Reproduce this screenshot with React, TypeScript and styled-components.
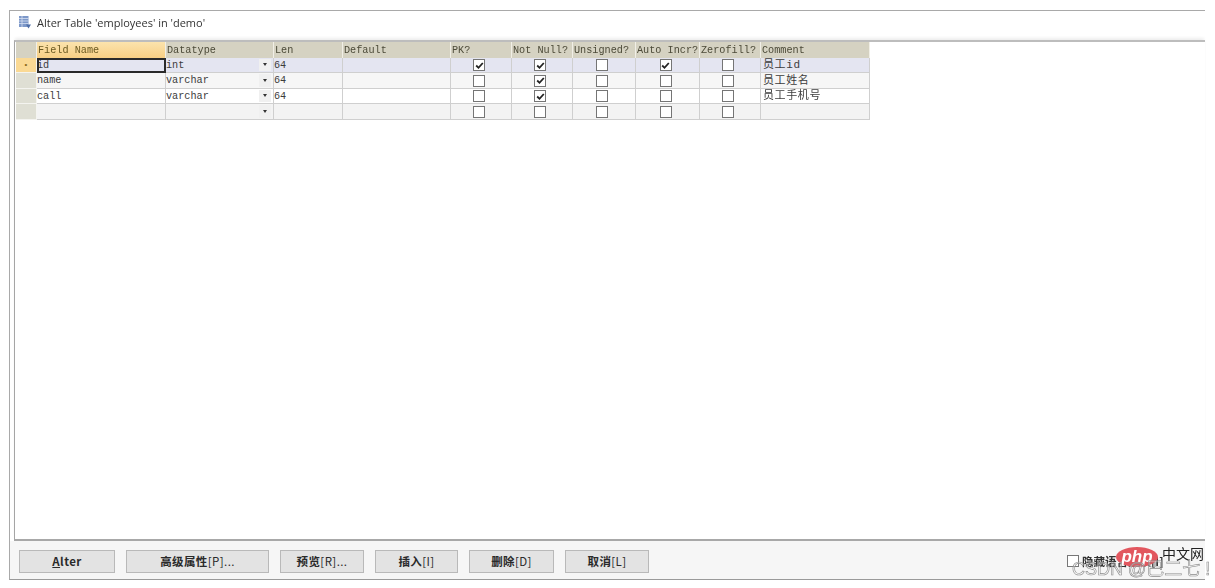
import React from "react";
import styled, { createGlobalStyle } from "styled-components";

const Global = createGlobalStyle`
  html, body { margin: 0; padding: 0; background: #fff; }
  body { width: 1215px; height: 588px; overflow: hidden; }
`;

const columns = "21px 129px 108px 69px 108px 61px 61px 63px 64px 61px 109px";

const Page = styled.div`
  position: relative;
  width: 1215px;
  height: 588px;
  padding: 10px 10px 8px 9px;
  box-sizing: border-box;
  filter: blur(0.35px);
`;

const Window = styled.div`
  height: 570px;
  box-sizing: border-box;
  display: flex;
  flex-direction: column;
  border-top: 1px solid #a9a9a9;
  border-left: 1px solid #a9a9a9;
  border-bottom: 1px solid #9a9a9a;
  background: #fff;
`;

const TitleBar = styled.div`
  height: 29px;
  flex: none;
  box-sizing: border-box;
  display: flex;
  align-items: center;
  gap: 5px;
  padding: 0 0 7px 8px;
  font: 11px "Open Sans", "Liberation Sans", sans-serif;
  color: #333;
`;

const Panel = styled.div`
  flex: 1;
  margin-left: 4px;
  padding-left: 1px;
  border-top: 2px solid #bdbdbd;
  border-left: 1px solid #a5a5a5;
  border-bottom: 2px solid #a8a8a8;
  box-shadow: 0 -3px 3px -1px #eeeeee;
`;

const Grid = styled.div`
  width: 854px;
  display: grid;
  grid-template-columns: ${columns};
  grid-auto-rows: 15.5px;
  font: 10.2px "Liberation Mono", monospace;
  color: #3c3c3c;
`;

const HeaderCell = styled.div<{ $active?: boolean }>`
  display: flex;
  align-items: center;
  padding: 1px 0 0 1px;
  box-sizing: border-box;
  white-space: nowrap;
  overflow: hidden;
  border-right: 1px solid #f1efe7;
  color: ${(p) => (p.$active ? "#6b5a22" : "#4c4a38")};
  background: ${(p) =>
    p.$active ? "linear-gradient(#fbe3ad, #f8cf85)" : "#d5d2c2"};
`;

const RowHead = styled.div<{ $current?: boolean }>`
  display: flex;
  align-items: center;
  justify-content: center;
  box-sizing: border-box;
  border-right: 1px solid #f4f4f0;
  border-bottom: 1px solid #f4f4f0;
  background: ${(p) => (p.$current ? "#fad994" : "#dfdfd4")};
  color: #8a6a1a;
  font-size: 8px;
`;

const Cell = styled.div<{ $bg: string; $cjk?: boolean; $focus?: boolean; $center?: boolean }>`
  display: flex;
  align-items: center;
  justify-content: ${(p) => (p.$center ? "center" : "flex-start")};
  position: relative;
  box-sizing: border-box;
  padding: 1px 0 0;
  white-space: nowrap;
  background: ${(p) => p.$bg};
  border-right: 1px solid #cfcfcf;
  border-bottom: 1px solid #cfcfcf;
  ${(p) => p.$focus && "outline: 2px solid #2a2a2a; outline-offset: -2px;"}
  ${(p) =>
    p.$cjk &&
    `font: 11px/13px "Liberation Mono", "Noto Sans CJK SC", sans-serif; letter-spacing: 0.6px; padding: 2px 0 0 2px;`}
`;

const Drop = styled.span`
  position: absolute;
  right: 2px;
  top: 1px;
  bottom: 1px;
  width: 12px;
  display: flex;
  align-items: center;
  justify-content: center;
  background: #f0f0f0;
  &::after {
    content: "";
    border-left: 2.5px solid transparent;
    border-right: 2.5px solid transparent;
    border-top: 3px solid #333;
  }
`;

const Check = styled.span`
  width: 12px;
  height: 12px;
  margin-left: -4px;
  box-sizing: border-box;
  display: flex;
  align-items: center;
  justify-content: center;
  background: #fff;
  border: 1.5px solid #757575;
`;

const BottomBar = styled.div`
  height: 38px;
  flex: none;
  box-sizing: border-box;
  position: relative;
  display: flex;
  align-items: flex-start;
  gap: 11px;
  padding: 9px 0 0 9px;
  background: #f6f6f6;
`;

const Btn = styled.button<{ $w: number }>`
  width: ${(p) => p.$w}px;
  height: 23px;
  padding: 0 0 2px;
  background: #e3e3e3;
  border: 1px solid #b9b9b9;
  font: bold 11.5px "Noto Sans CJK SC", "Liberation Sans", sans-serif;
  letter-spacing: 0.4px;
  color: #2a2a2a;
  white-space: nowrap;
`;

const KeyHint = styled.span`
  font-weight: 400;
`;

const Hide = styled.label`
  position: absolute;
  left: 1057px;
  top: 12px;
  display: flex;
  align-items: center;
  gap: 3px;
  font: bold 11.5px "Noto Sans CJK SC", sans-serif;
  color: #333;
  white-space: nowrap;
`;

const HideBox = styled.span`
  width: 10px;
  height: 10px;
  border: 1px solid #777;
  background: #fff;
  display: flex;
`;

const PhpBadge = styled.div`
  position: absolute;
  left: 1116px;
  top: 547px;
  width: 42px;
  height: 20px;
  border-radius: 50%;
  background: #e2575f;
  color: #fff;
  font: italic bold 17px/19px "Liberation Sans", sans-serif;
  text-align: center;
`;

const CnMark = styled.div`
  position: absolute;
  left: 1162px;
  top: 544px;
  font: 14px/18px "Noto Sans CJK SC", sans-serif;
  color: #222;
`;

const CsdnMark = styled.div`
  position: absolute;
  left: 1072px;
  top: 558px;
  font: 18px/22px "Liberation Sans", "Noto Sans CJK SC", sans-serif;
  color: rgba(255, 255, 255, 0.35);
  -webkit-text-stroke: 0.6px #8a8a8a;
  white-space: nowrap;
`;

const Tick = () => (
  <svg width="9" height="9" viewBox="0 0 9 9">
    <path d="M1.2 4.5 L3.5 6.8 L7.8 2" fill="none" stroke="#222" strokeWidth="1.8" />
  </svg>
);

const TableIcon = () => (
  <svg width="14" height="14" viewBox="0 0 14 14">
    <rect x="1" y="1" width="9.5" height="11" fill="#7d98c9" />
    <path d="M1 3.5H10.5M1 6H10.5M1 8.5H10.5M4 1V12" stroke="#d5e0f2" strokeWidth="0.8" />
    <path d="M8 9.5h5L10.5 13.5z" fill="#4f6fa8" />
  </svg>
);

type Row = {
  name: string;
  type: string;
  len: string;
  pk: boolean;
  nn: boolean;
  ai: boolean;
  comment: string;
  bg: string;
};

const rows: Row[] = [
  { name: "id", type: "int", len: "64", pk: true, nn: true, ai: true, comment: "员工id", bg: "#e4e5f1" },
  { name: "name", type: "varchar", len: "64", pk: false, nn: true, ai: false, comment: "员工姓名", bg: "#f6f6f6" },
  { name: "call", type: "varchar", len: "64", pk: false, nn: true, ai: false, comment: "员工手机号", bg: "#ffffff" },
  { name: "", type: "", len: "", pk: false, nn: false, ai: false, comment: "", bg: "#f3f3f3" },
];

const headers = ["Field Name", "Datatype", "Len", "Default", "PK?", "Not Null?", "Unsigned?", "Auto Incr?", "Zerofill?", "Comment"];
const buttons: [React.ReactNode, number][] = [
  [<><u>A</u>lter</>, 96],
  [<>高级属性<KeyHint>[P]...</KeyHint></>, 143],
  [<>预览<KeyHint>[R]...</KeyHint></>, 84],
  [<>插入<KeyHint>[I]</KeyHint></>, 83],
  [<>删除<KeyHint>[D]</KeyHint></>, 85],
  [<>取消<KeyHint>[L]</KeyHint></>, 84],
];

const Box = ({ bg, on }: { bg: string; on: boolean }) => (
  <Cell $bg={bg} $center>
    <Check>{on && <Tick />}</Check>
  </Cell>
);

export default function App() {
  return (
    <Page>
      <Global />
      <Window>
        <TitleBar>
          <TableIcon />
          Alter Table 'employees' in 'demo'
        </TitleBar>
        <Panel>
          <Grid>
            <HeaderCell />
            {headers.map((h, i) => (
              <HeaderCell key={h} $active={i === 0}>
                {h}
              </HeaderCell>
            ))}
            {rows.map((r, i) => (
              <React.Fragment key={i}>
                <RowHead $current={i === 0}>{i === 0 && "•"}</RowHead>
                <Cell $bg={r.bg} $focus={i === 0}>{r.name}</Cell>
                <Cell $bg={r.bg}>
                  {r.type}
                  <Drop />
                </Cell>
                <Cell $bg={r.bg}>{r.len}</Cell>
                <Cell $bg={r.bg} />
                <Box bg={r.bg} on={r.pk} />
                <Box bg={r.bg} on={r.nn} />
                <Box bg={r.bg} on={false} />
                <Box bg={r.bg} on={r.ai} />
                <Box bg={r.bg} on={false} />
                <Cell $bg={r.bg} $cjk>{r.comment}</Cell>
              </React.Fragment>
            ))}
          </Grid>
        </Panel>
        <BottomBar>
          {buttons.map(([label, w], i) => (
            <Btn key={i} $w={w}>{label}</Btn>
          ))}
          <Hide>
            <HideBox />
            隐藏语言选项[I]
          </Hide>
        </BottomBar>
      </Window>
      <PhpBadge>php</PhpBadge>
      <CnMark>中文网</CnMark>
      <CsdnMark>CSDN @巴二七 !</CsdnMark>
    </Page>
  );
}
